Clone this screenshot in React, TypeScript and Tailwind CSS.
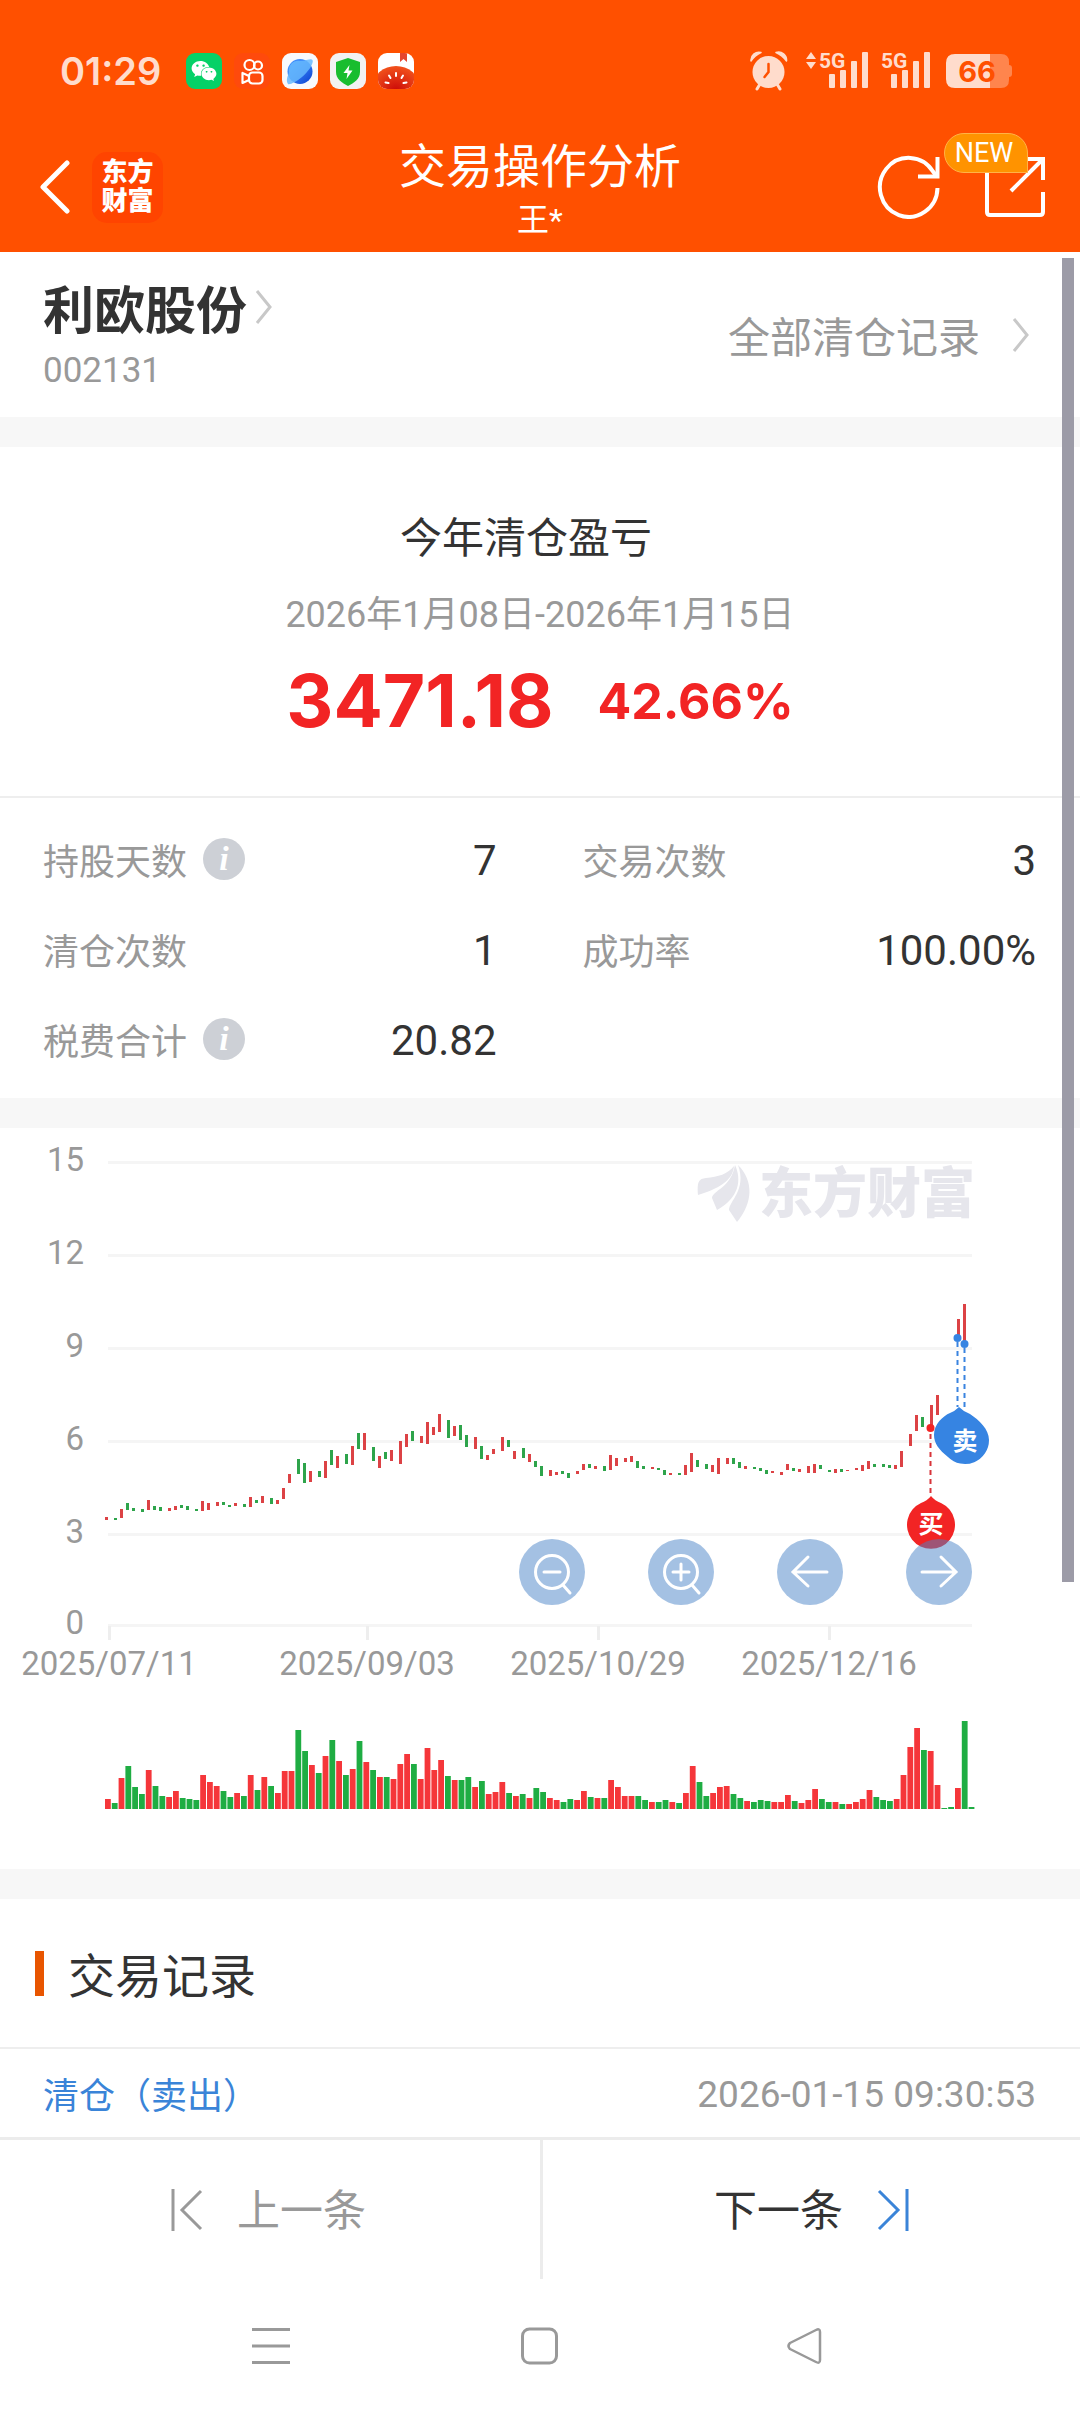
import { FaWeixin } from "react-icons/fa";

type Candle = [top: number, bottom: number, up: 0 | 1];

const RED = "#dc4245";
const GREEN = "#2ea44b";
const VOL_RED = "#f5363a";
const VOL_GREEN = "#1fad43";

// Price bars, y in chart units, one entry for each trading day
const candles: (Candle | null)[] = [
  [1517, 1520, 1], [1518, 1520, 0], [1509, 1518, 1], [1503, 1510, 0], [1508, 1511, 0], [1509, 1512, 0],
  [1500, 1510, 1], [1506, 1510, 0], [1507, 1511, 0], [1508, 1511, 1], [1506, 1510, 1], [1505, 1508, 0],
  [1506, 1510, 0], [1509, 1511, 0], [1501, 1511, 1], [1503, 1510, 1], [1502, 1506, 1], [1502, 1505, 0],
  [1505, 1507, 0], [1503, 1506, 1], [1504, 1507, 0], [1497, 1507, 1], [1500, 1503, 0], [1496, 1503, 1],
  [1498, 1504, 0], [1500, 1504, 1], [1488, 1499, 1], [1474, 1483, 1], [1459, 1474, 0], [1463, 1483, 0],
  [1471, 1482, 1], [1471, 1477, 0], [1461, 1478, 1], [1450, 1465, 0], [1456, 1468, 1], [1454, 1464, 0],
  [1446, 1465, 1], [1433, 1449, 0], [1433, 1450, 1], [1447, 1461, 0], [1456, 1468, 1], [1452, 1459, 0],
  [1450, 1461, 1], [1441, 1464, 1], [1434, 1447, 1], [1431, 1441, 0], [1436, 1443, 1], [1422, 1444, 1],
  [1427, 1435, 1], [1414, 1432, 1], [1420, 1438, 0], [1426, 1436, 1], [1425, 1440, 0], [1435, 1447, 0],
  [1437, 1449, 1], [1446, 1459, 0], [1455, 1460, 1], [1449, 1454, 1], [1437, 1451, 1], [1440, 1447, 0],
  [1451, 1459, 1], [1448, 1458, 0], [1454, 1462, 1], [1461, 1467, 0], [1466, 1476, 0], [1470, 1476, 1],
  [1472, 1475, 1], [1471, 1474, 0], [1473, 1478, 0], [1471, 1474, 1], [1464, 1470, 1], [1464, 1468, 0],
  [1466, 1469, 1], [1466, 1471, 0], [1455, 1470, 1], [1458, 1466, 1], [1458, 1462, 1], [1456, 1462, 1],
  [1461, 1468, 0], [1466, 1469, 0], [1467, 1469, 1], [1468, 1470, 0], [1470, 1475, 0], [1473, 1475, 1],
  [1473, 1475, 0], [1465, 1475, 1], [1453, 1472, 1], [1460, 1467, 0], [1464, 1469, 0], [1465, 1472, 1],
  [1458, 1474, 1], [1458, 1464, 1], [1458, 1464, 0], [1462, 1468, 0], [1466, 1469, 1], [1467, 1469, 0],
  [1468, 1471, 0], [1470, 1474, 0], [1471, 1473, 1], [1472, 1475, 1], [1464, 1470, 1], [1468, 1471, 0],
  [1469, 1472, 1], [1466, 1473, 1], [1464, 1473, 1], [1465, 1469, 0], [1470, 1472, 0], [1469, 1473, 1],
  [1469, 1472, 0], [1470, 1471, 1], [1468, 1470, 1], [1465, 1471, 1], [1461, 1469, 1], [1464, 1467, 0],
  [1464, 1467, 0], [1465, 1468, 0], [1465, 1469, 1], [1451, 1467, 1], [1434, 1446, 1], [1415, 1431, 1],
  [1417, 1427, 0], [1405, 1427, 1], [1395, 1415, 1], null, null, [1319, 1338, 1], [1304, 1343, 1],
];

// Bar heights; a negative value is a falling day
const volumes = [
  10, -6, 31, -43, -22, -15, 39, -23, -13, 12, 18, -11, -10, -9, 34, 27, 23, -18, -12, 16, -13, 34, -19, 32,
  -23, 16, 38, 38, -79, -58, 44, -36, 53, -69, 48, -34, 40, -68, 47, -39, 32, -32, 30, 45, 55, -45, 30, 61,
  39, 49, -33, 29, -29, -32, 22, -28, 15, 17, 27, -16, 13, -15, 11, -21, -17, 11, 9, -7, -10, 9, 18, -12,
  11, -11, 29, 22, 13, 13, -13, -9, 7, -7, -9, 7, -6, 16, 43, -27, -13, 16, 22, 23, -15, -11, 8, -7, -9,
  -8, 7, 7, 14, -8, 6, 9, 20, -10, -7, 7, -5, 5, 7, 10, 19, -12, -9, -8, 10, 34, 62, 81, -59, 58, 24, -1,
  -2, 21, -88, -2,
];

const yTicks = [
  { label: "15", y: 1162 },
  { label: "12", y: 1255 },
  { label: "9", y: 1348 },
  { label: "6", y: 1441 },
  { label: "3", y: 1534 },
  { label: "0", y: 1625 },
];

const xTicks = [
  { label: "2025/07/11", x: 109 },
  { label: "2025/09/03", x: 367 },
  { label: "2025/10/29", x: 598 },
  { label: "2025/12/16", x: 829 },
];

const stats = [
  { label: "持股天数", value: "7", info: true },
  { label: "交易次数", value: "3" },
  { label: "清仓次数", value: "1" },
  { label: "成功率", value: "100.00%" },
  { label: "税费合计", value: "20.82", info: true },
];

function Chevron() {
  return (
    <svg className="w-[18px] h-9" viewBox="0 0 18 36" fill="none" stroke="#c8c8c8" strokeWidth="3">
      <path d="M2 2L15 18L2 34" />
    </svg>
  );
}

function Signal({ data }: { data?: boolean }) {
  return (
    <svg className="w-[62px] h-10 overflow-visible" viewBox="0 0 62 40" fill="#ffdccc">
      {data && <path d="M0 8L5 1L10 8ZM0 11H10L5 18Z" />}
      <text x="13" y="17" fontSize="21" fontWeight="700" className="font-['Roboto',sans-serif]">5G</text>
      <rect x="23" y="23" width="6" height="14" rx="1" />
      <rect x="34" y="19" width="6" height="18" rx="1" />
      <rect x="45" y="10" width="6" height="27" rx="1" />
      <rect x="56" y="1" width="6" height="36" rx="1" />
    </svg>
  );
}

function StatusBar() {
  return (
    <div className="h-[122px] pt-[51px] pl-[60px] pr-[68px] flex justify-between items-start">
      <div className="flex items-center h-10 gap-3">
        <span className="text-[38px] leading-10 font-semibold text-[#ffdccc] font-['Inter',sans-serif] w-[114px]">
          01:29
        </span>
        <span className="w-9 h-9 rounded-[9px] bg-[#05d167] flex items-center justify-center text-white text-[26px]">
          <FaWeixin />
        </span>
        <svg className="w-9 h-9" viewBox="0 0 36 36" fill="none" stroke="#fff" strokeWidth="2.2">
          <rect width="36" height="36" rx="9" fill="#ff4a0c" stroke="none" />
          <circle cx="15.5" cy="12" r="5" />
          <circle cx="24" cy="12.5" r="4" />
          <rect x="15" y="19.5" width="13.5" height="11" rx="3.5" />
          <path d="M15 23L8.5 20V30L15 27" strokeLinejoin="round" />
        </svg>
        <svg className="w-9 h-9" viewBox="0 0 36 36">
          <defs>
            <linearGradient id="planet" x1="0" y1="0" x2="1" y2="1">
              <stop offset="0.3" stopColor="#3e8cfb" />
              <stop offset="1" stopColor="#0a3fd0" />
            </linearGradient>
          </defs>
          <rect width="36" height="36" rx="9" fill="#f8f9fc" />
          <circle cx="18" cy="18.5" r="12.5" fill="url(#planet)" />
          <path d="M6 31C4 28 5 24 7 20C6 11 12 7 18 8C24 8 29 5 30.5 7C32 10 27 18 20 24C14 29 8 32 6 31Z" fill="#66b8fd" opacity="0.85" />
        </svg>
        <svg className="w-9 h-9" viewBox="0 0 36 36">
          <rect width="36" height="36" rx="9" fill="#f2f2f2" />
          <path d="M18 5L30 9V19C30 26 24 30 18 33C12 30 6 26 6 19V9Z" fill="#18bd2f" />
          <path d="M19.5 12L13.5 20H17.5L16.5 26L22.5 17.5H18.5Z" fill="#fff" />
        </svg>
        <svg className="w-9 h-9" viewBox="0 0 36 36">
          <defs>
            <clipPath id="tile"><rect width="36" height="36" rx="9" /></clipPath>
            <radialGradient id="melon" cx="0.5" cy="0.6" r="0.6">
              <stop offset="0" stopColor="#cc0a08" />
              <stop offset="1" stopColor="#f2521c" />
            </radialGradient>
          </defs>
          <g clipPath="url(#tile)">
            <rect width="36" height="36" fill="#fff" />
            <path d="M22 0H29V9L25.5 6L22 9Z" fill="#e5462f" />
            <ellipse cx="18" cy="33" rx="23" ry="20" fill="url(#melon)" />
            <path d="M18 20V23M11 22.5L12.5 25M25 22.5L23.5 25M7.5 29.5L10.5 30M28.5 29.5L25.5 30" stroke="#fff" strokeWidth="2" strokeLinecap="round" />
          </g>
        </svg>
      </div>
      <div className="flex items-start h-10">
        <svg className="w-[38px] h-10 mr-[18px]" viewBox="0 0 38 40">
          <circle cx="18.5" cy="21" r="16" fill="#ffdccc" />
          <path d="M1 10A8 8 0 0 1 11 1.5Q5 4 1 10ZM36.5 10A8 8 0 0 0 26 1.5Q32 4 36.5 10Z" fill="#ffdccc" stroke="#ffdccc" strokeWidth="1.5" strokeLinejoin="round" />
          <path d="M10 33L7 38M27 33L30 38" stroke="#ffdccc" strokeWidth="3" strokeLinecap="round" />
          <path d="M18.5 13V21L14.5 26" fill="none" stroke="#ff5000" strokeWidth="2.5" strokeLinecap="round" />
        </svg>
        <Signal data />
        <Signal />
        <svg className="w-[66px] h-10 ml-4" viewBox="0 0 66 40">
          <path d="M52 3H55Q63 3 63 11V14Q66 14 66 17V23Q66 26 63 26V29Q63 37 55 37H44V3Z" fill="#ff854d" />
          <path d="M44 3H9Q0 3 0 12V28Q0 37 9 37H44Z" fill="#ffdccc" />
          <text x="31" y="31" textAnchor="middle" fontSize="29" fontWeight="700" fill="#ff5000" className="font-['Inter',sans-serif]">66</text>
        </svg>
      </div>
    </div>
  );
}

function Header() {
  return (
    <header className="bg-[#ff5000] text-white">
      <StatusBar />
      <div className="h-[130px] grid grid-cols-[1fr_auto_1fr] items-center px-[34px]">
        <div className="flex items-center gap-[22px] pl-[6px]">
          <button aria-label="返回">
            <svg className="w-[30px] h-[54px] block" viewBox="0 0 30 54" fill="none" stroke="#fff" strokeWidth="5" strokeLinecap="round" strokeLinejoin="round">
              <path d="M27 3L3 27L27 51" />
            </svg>
          </button>
          <span className="w-[71px] h-[71px] rounded-[15px] bg-[#ff4400] flex flex-col items-center justify-center text-[26px] leading-[29px] font-black">
            <span>东方</span>
            <span>财富</span>
          </span>
        </div>
        <div className="text-center">
          <h1 className="text-[47px] leading-[62px]">交易操作分析</h1>
          <p className="text-[32px] leading-9 mt-1">王*</p>
        </div>
        <div className="flex justify-end items-center gap-[43px]">
          <button aria-label="刷新">
            <svg className="w-16 h-16 block" viewBox="0 0 64 64" fill="none" stroke="#fff" strokeWidth="4">
              <path d="M60.5 33A28.8 29.5 0 1 1 56 16.5L59.5 21" />
              <path d="M60.5 2V21.5H41" />
            </svg>
          </button>
          <button aria-label="分享" className="relative">
            <svg className="w-[62px] h-16 block" viewBox="0 0 62 64" fill="none" stroke="#fff" strokeWidth="4">
              <path d="M3 14V57Q3 60 6 60H56Q59 60 59 57V37" />
              <path d="M38 4H59V25" />
              <path d="M59 4L27 36" />
            </svg>
            <span className="absolute -top-[22px] -left-10 w-[84px] h-10 rounded-[20px] rounded-br-none border border-[#ffb347] bg-[#ff9300] text-[27px] leading-[38px] pr-1 text-center">
              NEW
            </span>
          </button>
        </div>
      </div>
    </header>
  );
}

function Chart() {
  return (
    <section className="relative">
      <svg className="w-full h-auto block" viewBox="0 1128 1080 741">
        {yTicks.map((t) => (
          <g key={t.label}>
            <rect x="108" y={t.y - 1} width="864" height="3" fill="#f5f5f5" />
            <text x="84" y={t.y + 9} textAnchor="end" fontSize="33" fill="#999">{t.label}</text>
          </g>
        ))}
        {xTicks.map((t) => (
          <g key={t.label}>
            <rect x={t.x - 1} y="1626" width="3" height="14" fill="#eee" />
            <text x={t.x} y="1675" textAnchor="middle" fontSize="33" fill="#999">{t.label}</text>
          </g>
        ))}

        {/* Watermark */}
        <g fill="#e6e6ec">
          <path d="M698 1195C697 1181 699 1179 706 1178C718 1177 728 1174 734 1166C733 1178 724 1187 698 1195Z" />
          <path d="M717 1210L712 1198C713 1190 731 1188 735 1165C742 1180 739 1198 717 1210Z" />
          <path d="M737 1222L729 1210C729 1201 747 1190 738 1165C754 1181 753 1203 737 1222Z" />
          <text x="759" y="1213" fontSize="54" fontWeight="900">东方财富</text>
        </g>

        {candles.map((c, i) =>
          c && (
            <rect
              key={i}
              x={105 + 3 * Math.floor((i * 6.8) / 3 + 0.75)}
              y={c[0]}
              width="3"
              height={c[1] - c[0]}
              fill={c[2] ? RED : GREEN}
            />
          )
        )}

        {volumes.map((v, i) => (
          <rect key={i} x={105 + i * 6.8} y={1809 - Math.abs(v)} width="5.8" height={Math.abs(v)} fill={v > 0 ? VOL_RED : VOL_GREEN} />
        ))}

        {/* Buy and sell marks */}
        <g strokeWidth="2" strokeDasharray="5 4">
          <path d="M957.5 1342V1407M964.5 1348V1407" stroke="#3a84e0" />
          <path d="M930.5 1434V1496" stroke="#d8343a" />
        </g>
        <circle cx="957.5" cy="1338" r="4" fill="#3684e2" />
        <circle cx="964.5" cy="1344" r="4" fill="#3684e2" />
        <circle cx="930.5" cy="1428" r="4" fill="#f22424" />
        <path d="M959 1407Q964 1412 970 1414C979 1420 989 1429 989 1440A24 24 0 0 1 948 1457C939 1450 934 1443 934 1435C934 1424 943 1416 950 1413Q955 1411 959 1407Z" fill="#3684e2" />
        <path d="M931 1496Q935 1501 941 1503A24 24 0 1 1 921 1503Q927 1501 931 1496Z" fill="#f22424" />
        <g fill="#fff" fontSize="25" fontWeight="700" textAnchor="middle">
          <text x="965" y="1450">卖</text>
          <text x="931" y="1533">买</text>
        </g>
      </svg>

      <div className="absolute right-[108px] top-[411px] flex gap-[63px]">
        <button aria-label="缩小" className="w-[66px] h-[66px] rounded-full bg-[#4983c7]/50">
          <svg className="w-full h-full block" viewBox="0 0 66 66" fill="none" stroke="#fff" strokeWidth="3" strokeLinecap="round">
            <circle cx="33" cy="33" r="16.5" />
            <path d="M25 33H41M44 46L51 54" />
          </svg>
        </button>
        <button aria-label="放大" className="w-[66px] h-[66px] rounded-full bg-[#4983c7]/50">
          <svg className="w-full h-full block" viewBox="0 0 66 66" fill="none" stroke="#fff" strokeWidth="3" strokeLinecap="round">
            <circle cx="33" cy="33" r="16.5" />
            <path d="M25 33H41M33 25V41M44 46L51 54" />
          </svg>
        </button>
        <button aria-label="左移" className="w-[66px] h-[66px] rounded-full bg-[#4983c7]/50">
          <svg className="w-full h-full block" viewBox="0 0 66 66" fill="none" stroke="#fff" strokeWidth="3" strokeLinecap="round">
            <path d="M50 33H16M31 18L16 33L31 47" />
          </svg>
        </button>
        <button aria-label="右移" className="w-[66px] h-[66px] rounded-full bg-[#4983c7]/50">
          <svg className="w-full h-full block" viewBox="0 0 66 66" fill="none" stroke="#fff" strokeWidth="3" strokeLinecap="round">
            <path d="M16 33H50M35 18L50 33L35 47" />
          </svg>
        </button>
      </div>
    </section>
  );
}

export default function App() {
  return (
    <div className="min-h-screen bg-white text-[#333] font-['Roboto','Noto_Sans_CJK_SC',sans-serif]">
      <Header />

      <main className="relative">
        {/* Stock */}
        <section className="h-[165px] pl-[43px] pr-[50px] flex items-center justify-between">
          <div>
            <a href="#stock" className="flex items-center gap-2 text-[51px] leading-[56px] font-bold font-['Noto_Sans_CJK_SC',sans-serif]">
              利欧股份
              <Chevron />
            </a>
            <p className="text-[35px] leading-10 mt-4 text-[#999]">002131</p>
          </div>
          <a href="#records" className="flex items-center gap-8 text-[42px] leading-[60px] text-[#999] font-['Noto_Sans_CJK_SC',sans-serif]">
            全部清仓记录
            <Chevron />
          </a>
        </section>

        <div className="h-[30px] bg-[#f7f7f7]" />

        {/* Profit */}
        <section className="h-[351px] pt-[58px] border-b-2 border-[#eee] text-center">
          <h2 className="text-[42px] leading-[60px] pr-7 font-['Noto_Sans_CJK_SC',sans-serif]">今年清仓盈亏</h2>
          <p className="text-[36px] leading-[48px] mt-[26px] text-[#999]">2026年1月08日-2026年1月15日</p>
          <div className="flex items-center justify-center gap-11 mt-[22px] text-[#f22424] font-bold font-['Inter',sans-serif]">
            <span className="text-[73px] leading-[80px]">3471.18</span>
            <span className="text-[50px] leading-[80px]">42.66%</span>
          </div>
        </section>

        {/* Stats */}
        <dl className="grid grid-cols-2 gap-x-[86px] pl-[43px] pr-11 pt-4 pb-[14px]">
          {stats.map((s) => (
            <div key={s.label} className="h-[90px] flex items-center justify-between">
              <dt className="flex items-center gap-4 text-[36px] leading-[48px] text-[#999] font-['Noto_Sans_CJK_SC',sans-serif]">
                {s.label}
                {s.info && (
                  <button aria-label={s.label + "说明"} className="w-[42px] h-[42px] rounded-full bg-[#cdd0d6] text-white text-[34px] leading-10 italic font-bold font-['Liberation_Serif',serif]">
                    i
                  </button>
                )}
              </dt>
              <dd className="text-[42px] leading-[48px] pt-1">{s.value}</dd>
            </div>
          ))}
        </dl>

        <div className="h-[30px] bg-[#f7f7f7]" />

        <Chart />

        <div className="h-[30px] bg-[#f7f7f7]" />

        {/* Trades */}
        <section>
          <div className="h-[150px] pl-[35px] flex items-center gap-6 border-b-2 border-[#eee]">
            <span className="w-[9px] h-[45px] bg-[#e85500]" />
            <h2 className="text-[47px] leading-[60px] font-['Noto_Sans_CJK_SC',sans-serif]">交易记录</h2>
          </div>
          <div className="h-[88px] pl-[43px] pr-11 flex items-center justify-between leading-[48px]">
            <span className="text-[36px] text-[#3a84d8] font-['Noto_Sans_CJK_SC',sans-serif]">清仓（卖出）</span>
            <time className="text-[37px] pt-1 text-[#999]">2026-01-15 09:30:53</time>
          </div>
        </section>

        <div className="absolute top-[6px] right-[6px] w-3 h-[1324px] bg-[#9c9ba7]" />
      </main>

      <footer>
        <div className="grid grid-cols-2 border-t-[3px] border-[#ececec] text-[43px] leading-[60px]">
          <button className="h-[139px] flex items-center justify-center gap-[34px] pr-[3px] text-[#999]">
            <svg className="w-8 h-[42px]" viewBox="0 0 32 42" fill="none" stroke="#999" strokeWidth="3">
              <path d="M2 0V42M30 2L11 21L30 40" />
            </svg>
            <span className="pt-[3px]">上一条</span>
          </button>
          <button className="h-[139px] flex items-center justify-center gap-[34px] border-l-[3px] border-[#ececec]">
            <span className="pt-[3px]">下一条</span>
            <svg className="w-8 h-[42px]" viewBox="0 0 32 42" fill="none" stroke="#3a84d8" strokeWidth="3">
              <path d="M30 0V42M2 2L21 21L2 40" />
            </svg>
          </button>
        </div>

        {/* System navigation */}
        <nav className="h-[133px] px-[252px] flex items-center justify-between">
          <button aria-label="任务">
            <svg className="w-[38px] h-[38px] block" viewBox="0 0 38 38" stroke="#999" strokeWidth="3">
              <path d="M0 2.5H38M0 19H38M0 35.5H38" />
            </svg>
          </button>
          <button aria-label="主页">
            <svg className="w-[38px] h-[38px] block" viewBox="0 0 38 38" fill="none" stroke="#999" strokeWidth="3">
              <rect x="1.5" y="2" width="34" height="34" rx="7" />
            </svg>
          </button>
          <button aria-label="后退">
            <svg className="w-[38px] h-[38px] block overflow-visible" viewBox="0 0 38 38" fill="none" stroke="#999" strokeWidth="2.5" strokeLinejoin="round">
              <path d="M26 3Q30 1 30 5V33Q30 37 26 35L0 22Q-3 19 0 16Z" />
            </svg>
          </button>
        </nav>
      </footer>
    </div>
  );
}
